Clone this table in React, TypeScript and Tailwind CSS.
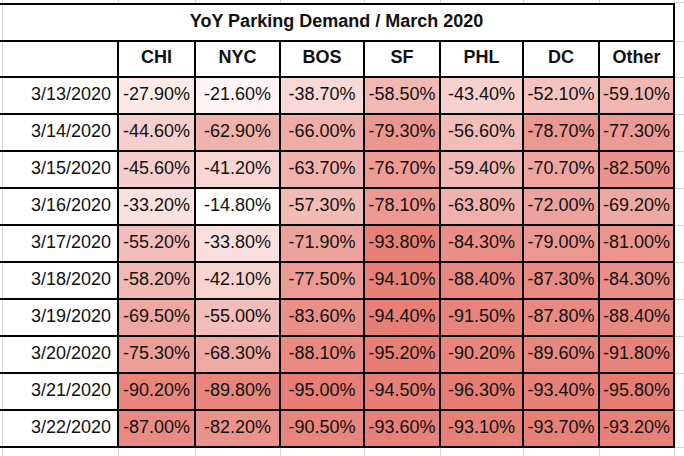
import React from "react";

const cities = ["CHI", "NYC", "BOS", "SF", "PHL", "DC", "Other"];

const rows: [string, number[]][] = [
  ["3/13/2020", [-27.9, -21.6, -38.7, -58.5, -43.4, -52.1, -59.1]],
  ["3/14/2020", [-44.6, -62.9, -66.0, -79.3, -56.6, -78.7, -77.3]],
  ["3/15/2020", [-45.6, -41.2, -63.7, -76.7, -59.4, -70.7, -82.5]],
  ["3/16/2020", [-33.2, -14.8, -57.3, -78.1, -63.8, -72.0, -69.2]],
  ["3/17/2020", [-55.2, -33.8, -71.9, -93.8, -84.3, -79.0, -81.0]],
  ["3/18/2020", [-58.2, -42.1, -77.5, -94.1, -88.4, -87.3, -84.3]],
  ["3/19/2020", [-69.5, -55.0, -83.6, -94.4, -91.5, -87.8, -88.4]],
  ["3/20/2020", [-75.3, -68.3, -88.1, -95.2, -90.2, -89.6, -91.8]],
  ["3/21/2020", [-90.2, -89.8, -95.0, -94.5, -96.3, -93.4, -95.8]],
  ["3/22/2020", [-87.0, -82.2, -90.5, -93.6, -93.1, -93.7, -93.2]],
];

// white -> #e67c73 scale, same as the sheet's conditional format
function heat(v: number) {
  const lo = 14.8;
  const hi = 96.3;
  const t = Math.min(1, Math.max(0, (Math.abs(v) - lo) / (hi - lo)));
  const r = Math.round(255 + (230 - 255) * t);
  const g = Math.round(255 + (124 - 255) * t);
  const b = Math.round(255 + (115 - 255) * t);
  return `rgb(${r}, ${g}, ${b})`;
}

const leftGrid = "shadow-[inset_2px_0_0_#fff,inset_3px_0_0_#d4d4d4]";
const cell = "flex items-center pb-[3px] border-r-2 border-b-2 border-black";

export default function App() {
  return (
    <div
      className="w-[684px] h-[456px] overflow-hidden bg-white text-[#111]"
      style={{ fontFamily: '"Liberation Sans", Arial, sans-serif' }}
    >
      <div className="grid h-full grid-cols-[119px_77px_85px_84px_76px_83px_76px_75px_1fr] grid-rows-[3px_39px_36px_repeat(10,37px)_1fr]">
        {/* gridlines above the table */}
        <div className={`border-r border-[#d4d4d4] ${leftGrid}`} />
        {cities.map((c) => (
          <div key={"t" + c} className="border-r border-[#d4d4d4]" />
        ))}
        <div className="border-b border-[#d4d4d4]" />

        {/* title */}
        <div
          className={`col-span-8 border-t-2 ${cell} justify-center text-[18px] font-bold ${leftGrid}`}
        >
          YoY Parking Demand / March 2020
        </div>
        <div className="border-b border-[#d4d4d4]" />

        {/* header */}
        <div className={`${cell} ${leftGrid}`} />
        {cities.map((c) => (
          <div key={c} className={`${cell} justify-center text-[18px] font-bold`}>
            {c}
          </div>
        ))}
        <div className="border-b border-[#d4d4d4]" />

        {/* data */}
        {rows.map(([date, vals]) => (
          <React.Fragment key={date}>
            <div className={`${cell} justify-end pr-[6px] text-[18px] ${leftGrid}`}>
              {date}
            </div>
            {vals.map((v, i) => (
              <div
                key={i}
                className={`${cell} justify-center text-[18px] whitespace-nowrap`}
                style={{ backgroundColor: heat(v) }}
              >
                {v.toFixed(2)}%
              </div>
            ))}
            <div className="border-b border-[#d4d4d4]" />
          </React.Fragment>
        ))}

        {/* gridlines below the table */}
        <div className={`border-r border-[#d4d4d4] ${leftGrid}`} />
        {cities.map((c) => (
          <div key={"b" + c} className="border-r border-[#d4d4d4]" />
        ))}
        <div />
      </div>
    </div>
  );
}
